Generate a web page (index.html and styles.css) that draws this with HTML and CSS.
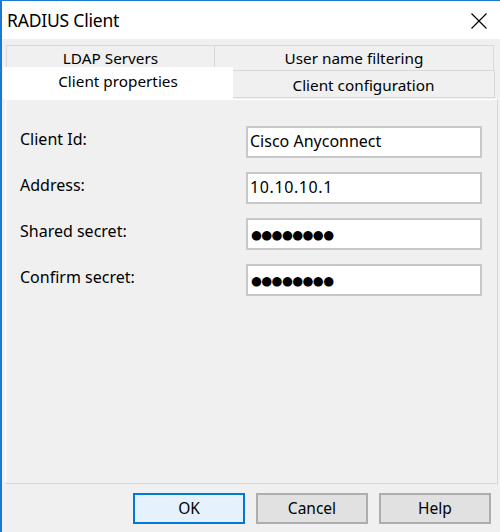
FILE: index.html
```html
<!DOCTYPE html>
<html>
<head>
<meta charset="utf-8">
<link rel="stylesheet" href="styles.css">
</head>
<body>
<div class="window">
  <div class="titlebar">
    <span class="title">RADIUS Client</span>
    <svg class="close" width="16" height="16" viewBox="0 0 16 16"><path d="M0.5 0.5 L15.5 15.5 M15.5 0.5 L0.5 15.5" stroke="#000" stroke-width="1.2" fill="none"/></svg>
  </div>
  <div class="body">
    <div class="tabs">
      <div class="tabrow back">
        <div class="tab t-ldap">LDAP Servers</div>
        <div class="tab t-user">User name filtering</div>
      </div>
      <div class="tabrow front">
        <div class="tab t-props selected">Client properties</div>
        <div class="tab t-conf">Client configuration</div>
      </div>
    </div>
    <div class="panel">
      <div class="form">
        <div class="row"><span class="label">Client Id:</span><div class="input">Cisco Anyconnect</div></div>
        <div class="row"><span class="label">Address:</span><div class="input addr">10.10.10.1</div></div>
        <div class="row"><span class="label">Shared secret:</span><div class="input dots">●●●●●●●●</div></div>
        <div class="row"><span class="label">Confirm secret:</span><div class="input dots">●●●●●●●●</div></div>
      </div>
    </div>
    <div class="buttons">
      <div class="btn default">OK</div>
      <div class="btn">Cancel</div>
      <div class="btn">Help</div>
    </div>
  </div>
</div>
</body>
</html>
```
FILE: styles.css
```css
html, body {
  margin: 0;
  padding: 0;
  background: #f0f0f0;
}
.window {
  width: 500px;
  height: 532px;
  box-sizing: border-box;
  border-top: 1px solid #1a7ad0;
  border-left: 2px solid #1a7ad0;
  background: #f0f0f0;
  font-family: "Noto Sans", "Open Sans", sans-serif;
  color: #000;
  overflow: hidden;
}
.titlebar {
  height: 38px;
  background: #fff;
  display: flex;
  align-items: center;
  justify-content: space-between;
  padding: 0 13px 0 5px;
}
.title {
  font-size: 17.5px;
  letter-spacing: -0.2px;
  margin-top: -1px;
}
.close {
  display: block;
  margin-top: 1px;
}
.body {
  padding: 6px 0 0 0;
}
.tabs {
  display: flex;
  flex-direction: column;
  font-size: 15.3px;
}
.tabrow {
  display: flex;
}
.tab {
  box-sizing: border-box;
  text-align: center;
  border: 1px solid #d9d9d9;
  background: #f0f0f0;
}
.back {
  margin-left: 4px;
  height: 25px;
}
.back .tab {
  height: 25px;
  line-height: 25px;
  border-bottom: none;
}
.t-ldap { width: 209px; }
.t-user { width: 279px; border-left: none; }
.front {
  margin-left: 1px;
  margin-top: -4px;
  height: 33px;
  align-items: flex-end;
}
.t-props {
  width: 230px;
  height: 32px;
  line-height: 27px;
  background: #fff;
  border-color: #fff;
  position: relative;
  z-index: 1;
}
.t-conf {
  width: 262px;
  height: 28px;
  line-height: 28px;
  border-left: none;
  margin-bottom: 1px;
}
.panel {
  box-sizing: border-box;
  margin: 0 2px 0 3px;
  height: 385px;
  border: 1px solid #d9d9d9;
  border-top: 1px solid #fff;
  border-left: 1px solid #fff;
  background: #f0f0f0;
  padding: 26px 15px 0 14px;
}
.form {
  display: flex;
  flex-direction: column;
  gap: 14px;
}
.row {
  display: flex;
  justify-content: space-between;
  align-items: flex-start;
  height: 32px;
}
.label {
  font-size: 16px;
  line-height: 24px;
  margin-top: 1px;
}
.input {
  box-sizing: border-box;
  width: 236px;
  height: 32px;
  border: 2px solid #c8c8c8;
  background: #fff;
  font-size: 16px;
  line-height: 27px;
  padding-left: 2px;
}
.addr {
  letter-spacing: 0.6px;
}
.dots {
  font-family: "DejaVu Sans", sans-serif;
  font-size: 12.5px;
  letter-spacing: -0.6px;
  line-height: 29px;
  padding-left: 3px;
}
.buttons {
  display: flex;
  justify-content: flex-end;
  gap: 11px;
  padding: 9px 9px 0 0;
}
.btn {
  box-sizing: border-box;
  width: 112px;
  height: 31px;
  border: 2px solid #adadad;
  background: #e1e1e1;
  font-size: 15.5px;
  line-height: 27px;
  text-align: center;
}
.btn.default {
  border-color: #0078d7;
  background: #e5f1fb;
}
```
